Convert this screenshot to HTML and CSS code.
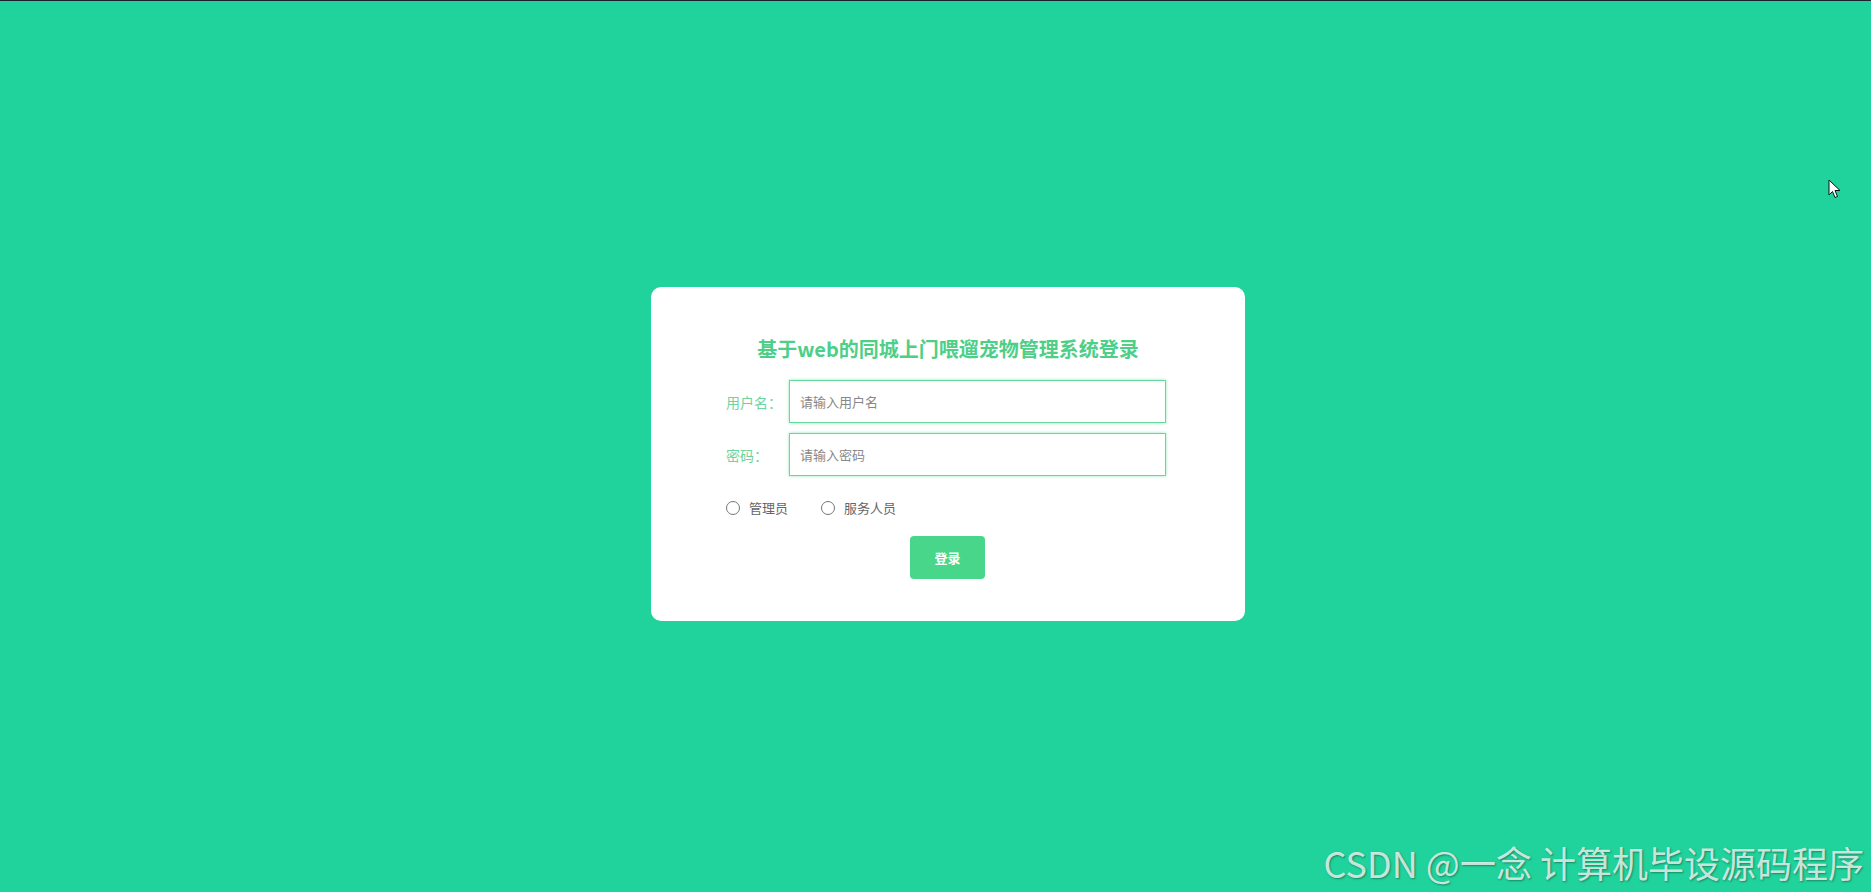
FILE: index.html
```html
<!DOCTYPE html>
<html lang="zh-CN">
<head>
    <meta charset="UTF-8">
    <meta name="viewport" content="width=device-width, initial-scale=1.0">
    <title>基于web的同城上门喂遛宠物管理系统登录</title>
    <link rel="stylesheet" href="styles.css">
</head>
<body>
    <div class="page">
        <div class="login-box">
            <h2 class="title">基于web的同城上门喂遛宠物管理系统登录</h2>

            <div class="form">
                <div class="form-row">
                    <label for="username">用户名：</label>
                    <input type="text" id="username" placeholder="请输入用户名">
                </div>
                <div class="form-row">
                    <label for="password">密码：</label>
                    <input type="password" id="password" placeholder="请输入密码">
                </div>

                <div class="roles">
                    <label class="role"><input type="radio" name="role" value="admin"><span>管理员</span></label>
                    <label class="role"><input type="radio" name="role" value="staff"><span>服务人员</span></label>
                </div>

                <div class="actions">
                    <button type="button">登录</button>
                </div>
            </div>
        </div>
    </div>

    <!-- screen overlays -->
    <svg class="cursor" width="13" height="20" viewBox="0 0 13 20">
        <path d="M1 1 L1 16 L4.5 12.5 L7 18.5 L9.5 17.5 L7 11.5 L12 11.5 Z" fill="#fff" stroke="#111" stroke-width="1" stroke-linejoin="round"/>
    </svg>
    <div class="watermark">CSDN @一念 计算机毕设源码程序</div>
</body>
</html>
```

FILE: styles.css
```css
html, body {
    margin: 0;
    height: 100%;
}
body {
    background-color: #20d29b;
    border-top: 1px solid #1c2030;
    box-sizing: border-box;
    font-family: "Noto Sans CJK SC", "Noto Sans", sans-serif;
    overflow: hidden;
    position: relative;
}
.page {
    display: flex;
    justify-content: center;
    padding-top: 286px;
    padding-left: 25px;
}
.login-box {
    width: 594px;
    height: 334px;
    box-sizing: border-box;
    background-color: #fff;
    border-radius: 10px;
    padding-top: 48px;
}
.title {
    margin: 0;
    text-align: center;
    font-size: 20px;
    line-height: 28px;
    font-weight: bold;
    color: #4ecf88;
}
.form {
    width: 440px;
    margin: 17px 0 0 75px;
}
.form-row {
    display: flex;
    align-items: center;
    margin-bottom: 10px;
}
.form-row label {
    width: 63px;
    font-size: 14px;
    color: #6fd3a0;
}
.form-row input {
    width: 377px;
    height: 43px;
    box-sizing: border-box;
    padding: 0 10px;
    border: 1px solid #66d99b;
    box-shadow: 0 0 3px #8eeab9;
    outline: none;
    font-size: 13px;
    font-family: inherit;
}
.form-row input::placeholder {
    color: #888;
}
.roles {
    display: flex;
    gap: 33px;
    margin-top: 22px;
    font-size: 13px;
    color: #666;
}
.role {
    display: flex;
    align-items: center;
}
.role input {
    width: 14px;
    height: 14px;
    margin: 0 9px 0 0;
}
.actions {
    display: flex;
    justify-content: center;
    margin-top: 19px;
    padding-left: 3px;
}
.actions button {
    width: 75px;
    height: 43px;
    background-color: #48d68a;
    color: #fff;
    border: none;
    border-radius: 4px;
    font-size: 13px;
    font-weight: bold;
    font-family: inherit;
    cursor: pointer;
}
.cursor {
    position: absolute;
    left: 1828px;
    top: 178px;
}
.watermark {
    position: absolute;
    right: 7px;
    bottom: 8px;
    font-size: 36px;
    line-height: 44px;
    color: rgba(232, 243, 238, 0.85);
    text-shadow: 1px 1px 2px rgba(0, 0, 0, 0.35);
    white-space: nowrap;
}
```
